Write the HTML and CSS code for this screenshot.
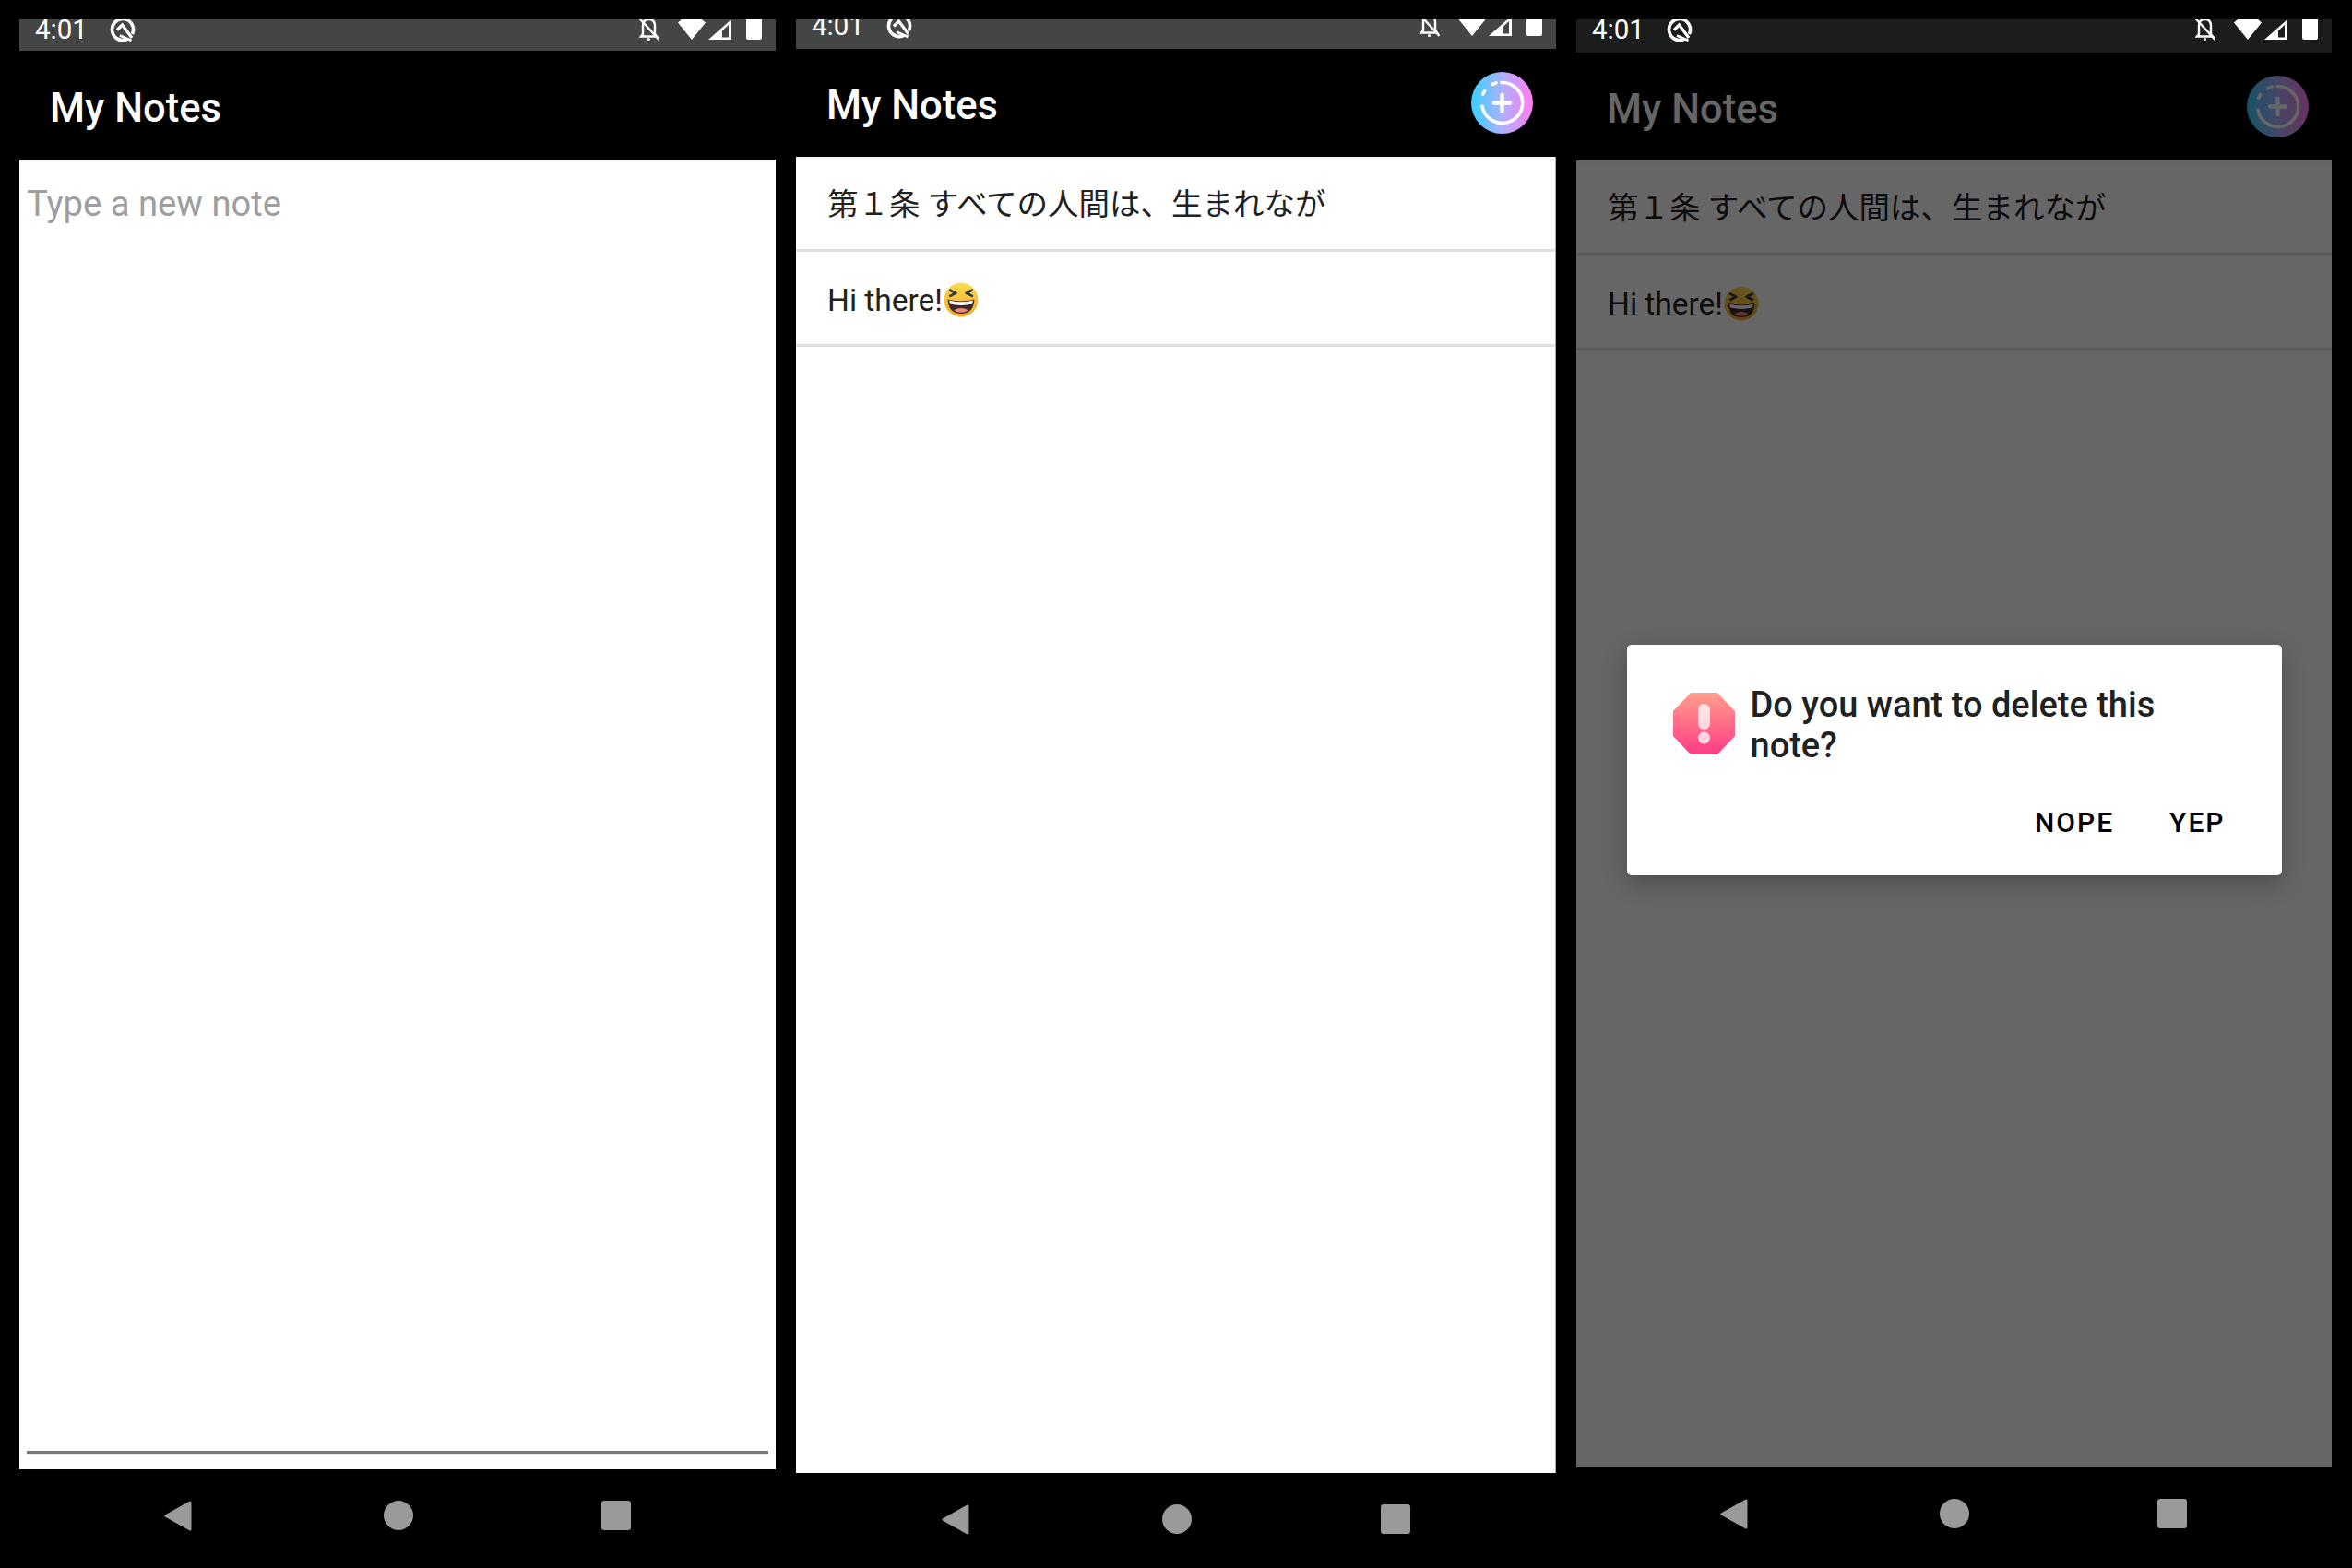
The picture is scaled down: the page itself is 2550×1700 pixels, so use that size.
FILE: index.html
```html
<!DOCTYPE html>
<html lang="en">
<head>
    <meta charset="UTF-8">
    <meta name="viewport" content="width=device-width, initial-scale=1.0">
    <title>My Notes</title>
    <link rel="stylesheet" href="styles.css">
</head>
<body>
    <svg class="defs" width="0" height="0">
        <defs>
            <symbol id="ic-sync" viewBox="0 0 30 30">
                <path d="M20.75 24.96 A11.5 11.5 0 1 1 25.4 19.9" fill="none" stroke="#fff" stroke-width="3.6"/>
                <path d="M9 15.5 L14.5 10 L25 24" fill="none" stroke="#fff" stroke-width="3.2"/>
                <path d="M12 21.5 L24.5 27" stroke="#fff" stroke-width="2.6"/>
            </symbol>
            <symbol id="ic-bell" viewBox="0 0 23 26">
                <path d="M5 19 L5 10 Q5 3 11.5 3 Q18 3 18 10 L18 19 L20 21.5 L3 21.5 Z" fill="none" stroke="#fff" stroke-width="2.4"/>
                <path d="M0.5 1 L22.5 25" stroke="#fff" stroke-width="2.4"/>
                <circle cx="11.5" cy="24.5" r="1.5" fill="#fff"/>
            </symbol>
            <symbol id="ic-wifi" viewBox="0 0 30 22">
                <path d="M4 0 H26 L30 3.5 L15 22 L0 3.5 Z" fill="#fff"/>
            </symbol>
            <symbol id="ic-signal" viewBox="0 0 25 22">
                <path d="M25 0 V22 H0 Z M22 6 L15 12.5 V19.5 H22 Z" fill="#fff" fill-rule="evenodd"/>
            </symbol>
            <symbol id="ic-add" viewBox="0 0 67 67">
                <circle cx="33.5" cy="33.5" r="33.5" fill="url(#add-grad)"/>
                <path d="M12 37 A22 22 0 1 0 33 11.5" fill="none" stroke="#fff" stroke-width="3.6" stroke-linecap="round"/>
                <path d="M23 13.5 L27 11.8 M12.8 24 L14.6 20.5" fill="none" stroke="#fff" stroke-width="3.6" stroke-linecap="round"/>
                <path d="M33.5 25 V42 M25 33.5 H42" stroke="#fff" stroke-width="4.4" stroke-linecap="round"/>
            </symbol>
            <linearGradient id="add-grad" x1="0" y1="0" x2="1" y2="0">
                <stop offset="0" stop-color="#36d1ff"/>
                <stop offset="0.5" stop-color="#aeb0ff"/>
                <stop offset="1" stop-color="#ff7df0"/>
            </linearGradient>
            <symbol id="ic-emoji" viewBox="0 0 37 37">
                <circle cx="18.5" cy="18.5" r="18" fill="url(#emoji-grad)"/>
                <path d="M6 8 L13 11.5 L6 15 M31 8 L24 11.5 L31 15" fill="none" stroke="#3a3a3a" stroke-width="2.6" stroke-linejoin="round"/>
                <path d="M4.5 18 Q18.5 22 32.5 18 Q32 33 18.5 33 Q5 33 4.5 18 Z" fill="#3b2a25"/>
                <path d="M6 19 Q18.5 22.6 31 19 L30.4 23 Q18.5 25.5 6.6 23 Z" fill="#fff"/>
                <path d="M11 29.5 Q18.5 25 26 29.5 Q23 32 18.5 32 Q14 32 11 29.5 Z" fill="#ef8a80"/>
            </symbol>
            <linearGradient id="emoji-grad" x1="0" y1="0" x2="0" y2="1">
                <stop offset="0" stop-color="#fddc55"/>
                <stop offset="1" stop-color="#f5a623"/>
            </linearGradient>
            <linearGradient id="alert-grad" x1="0" y1="0" x2="0" y2="1">
                <stop offset="0" stop-color="#ff9f8c"/>
                <stop offset="1" stop-color="#ff3c86"/>
            </linearGradient>
            <symbol id="ic-back" viewBox="0 0 30 33">
                <path d="M28 2 V31 L2 16.5 Z" fill="#9a9a9a" stroke="#9a9a9a" stroke-width="3" stroke-linejoin="round"/>
            </symbol>
        </defs>
    </svg>

    <div class="screens">
        <div class="phone phone-editor">
            <div class="status-bar">
                <div class="status-left">
                    <span class="clock">4:01</span>
                    <svg class="ic-sync"><use href="#ic-sync"/></svg>
                </div>
                <div class="status-right">
                    <svg class="ic-bell"><use href="#ic-bell"/></svg>
                    <svg class="ic-wifi"><use href="#ic-wifi"/></svg>
                    <svg class="ic-signal"><use href="#ic-signal"/></svg>
                    <span class="battery"></span>
                </div>
            </div>
            <div class="app">
                <div class="app-bar"><span class="app-title">My Notes</span></div>
                <div class="content editor">
                    <div class="placeholder">Type a new note</div>
                    <div class="input-line"></div>
                </div>
            </div>
            <div class="nav-bar">
                <svg class="nav-back"><use href="#ic-back"/></svg>
                <span class="nav-home"></span>
                <span class="nav-recent"></span>
            </div>
        </div>

        <div class="phone phone-list">
            <div class="status-bar">
                <div class="status-left">
                    <span class="clock">4:01</span>
                    <svg class="ic-sync"><use href="#ic-sync"/></svg>
                </div>
                <div class="status-right">
                    <svg class="ic-bell"><use href="#ic-bell"/></svg>
                    <svg class="ic-wifi"><use href="#ic-wifi"/></svg>
                    <svg class="ic-signal"><use href="#ic-signal"/></svg>
                    <span class="battery"></span>
                </div>
            </div>
            <div class="app">
                <div class="app-bar">
                    <span class="app-title">My Notes</span>
                    <svg class="ic-add"><use href="#ic-add"/></svg>
                </div>
                <div class="content">
                    <div class="note">第１条 すべての人間は、生まれなが</div>
                    <div class="note">Hi there!<svg class="ic-emoji"><use href="#ic-emoji"/></svg></div>
                </div>
            </div>
            <div class="nav-bar">
                <svg class="nav-back"><use href="#ic-back"/></svg>
                <span class="nav-home"></span>
                <span class="nav-recent"></span>
            </div>
        </div>

        <div class="phone phone-dialog">
            <div class="status-bar">
                <div class="status-left">
                    <span class="clock">4:01</span>
                    <svg class="ic-sync"><use href="#ic-sync"/></svg>
                </div>
                <div class="status-right">
                    <svg class="ic-bell"><use href="#ic-bell"/></svg>
                    <svg class="ic-wifi"><use href="#ic-wifi"/></svg>
                    <svg class="ic-signal"><use href="#ic-signal"/></svg>
                    <span class="battery"></span>
                </div>
            </div>
            <div class="app">
                <div class="app-bar">
                    <span class="app-title">My Notes</span>
                    <svg class="ic-add"><use href="#ic-add"/></svg>
                </div>
                <div class="content">
                    <div class="note">第１条 すべての人間は、生まれなが</div>
                    <div class="note">Hi there!<svg class="ic-emoji"><use href="#ic-emoji"/></svg></div>
                </div>
                <div class="scrim">
                    <div class="dialog">
                        <div class="dialog-body">
                            <svg class="ic-alert" viewBox="0 0 67 67">
                                <path d="M19 0 H48 L67 20 V47 L48 67 H19 L0 47 V20 Z" fill="url(#alert-grad)"/>
                                <rect x="27" y="12" width="13" height="28" rx="6.5" fill="#fff" fill-opacity="0.75"/>
                                <circle cx="33.5" cy="49" r="6.5" fill="#fff" fill-opacity="0.75"/>
                            </svg>
                            <div class="dialog-text">Do you want to delete this note?</div>
                        </div>
                        <div class="dialog-actions">
                            <span class="dialog-btn">NOPE</span>
                            <span class="dialog-btn">YEP</span>
                        </div>
                    </div>
                </div>
            </div>
            <div class="nav-bar">
                <svg class="nav-back"><use href="#ic-back"/></svg>
                <span class="nav-home"></span>
                <span class="nav-recent"></span>
            </div>
        </div>
    </div>
</body>
</html>
```

FILE: styles.css
```css
html, body {
    margin: 0;
    height: 100%;
    background-color: #000;
    overflow: hidden;
}
body {
    font-family: 'Roboto', 'Noto Sans CJK JP', sans-serif;
    color: #212121;
}
.defs {
    display: block;
    height: 0;
}
.screens {
    display: flex;
    gap: 22px;
    padding: 21px 22px 0 21px;
}
.phone {
    display: flex;
    flex-direction: column;
}
.phone-editor { width: 820px; }
.phone-list { width: 824px; }
.phone-dialog { width: 819px; }

/* status bar */
.status-bar {
    display: flex;
    justify-content: space-between;
    align-items: flex-end;
    height: 34px;
    padding: 0 15px 12px 17px;
    box-sizing: border-box;
    background-color: #444645;
    overflow: hidden;
}
.phone-list .status-bar {
    height: 32px;
    padding-bottom: 14px;
}
.phone-dialog .status-bar {
    height: 36px;
    padding-bottom: 14px;
    background-color: #1b1d1c;
}
.status-left, .status-right {
    display: flex;
    align-items: flex-end;
}
.clock {
    font-size: 29.5px;
    line-height: 22px;
    color: #fff;
    margin-right: 23px;
}
.ic-sync {
    width: 30px;
    height: 30px;
    margin-bottom: -4px;
}
.ic-bell {
    width: 23px;
    height: 26px;
    margin-right: 20px;
    margin-bottom: -1px;
}
.ic-wifi {
    width: 30px;
    height: 22px;
    margin-right: 3px;
}
.ic-signal {
    width: 25px;
    height: 22px;
    margin-right: 16px;
}
.battery {
    display: block;
    width: 17px;
    height: 24px;
    background-color: #fff;
    border-radius: 2px;
}

/* app */
.app {
    position: relative;
}
.app-bar {
    display: flex;
    justify-content: space-between;
    align-items: center;
    height: 118px;
    padding: 0 25px 0 33px;
    box-sizing: border-box;
    background-color: #000;
}
.phone-list .app-bar, .phone-dialog .app-bar {
    height: 117px;
}
.app-title {
    font-size: 43.5px;
    font-weight: 500;
    color: #fff;
    margin-top: 6px;
}
.ic-add {
    width: 67px;
    height: 67px;
}
.content {
    height: 1427px;
    background-color: #fff;
    box-shadow: inset 0 5px 5px -4px rgba(0, 0, 0, 0.08);
}
.phone-list .content {
    border-right: 1px solid #aaa;
    box-sizing: border-box;
}
.phone-dialog .content {
    height: 1417px;
}
.editor {
    display: flex;
    flex-direction: column;
    justify-content: space-between;
    height: 1420px;
    padding: 0 8px 16px 8px;
    box-sizing: border-box;
}
.placeholder {
    font-size: 38.2px;
    line-height: 44px;
    padding-top: 26px;
    color: #9e9e9e;
}
.input-line {
    height: 3px;
    background-color: #777;
    border-bottom: 1px solid #e6e6e6;
}
.note {
    display: flex;
    align-items: center;
    height: 103px;
    box-sizing: border-box;
    padding-left: 34px;
    font-size: 33.5px;
    border-bottom: 3px solid #e0e0e0;
}
.note:first-child {
    padding-bottom: 3px;
}
.note:nth-child(2) {
    padding-top: 4px;
}
.ic-emoji {
    width: 38px;
    height: 38px;
    margin-left: 1px;
}

/* dialog */
.scrim {
    position: absolute;
    top: 0;
    left: 0;
    right: 0;
    bottom: 0;
    display: flex;
    justify-content: center;
    align-items: center;
    background-color: rgba(0, 0, 0, 0.6);
}
.dialog {
    width: 710px;
    height: 250px;
    padding: 43px 61px 0 50px;
    box-sizing: border-box;
    background-color: #fff;
    border-radius: 5px;
    box-shadow: 0 8px 24px rgba(0, 0, 0, 0.25);
}
.dialog-body {
    display: flex;
    gap: 17px;
}
.ic-alert {
    flex: none;
    width: 67px;
    height: 67px;
    margin-top: 9px;
}
.dialog-text {
    font-size: 38px;
    font-weight: 500;
    line-height: 44px;
    padding-right: 30px;
}
.dialog-actions {
    display: flex;
    justify-content: flex-end;
    gap: 60px;
    margin-top: 44px;
}
.dialog-btn {
    font-size: 30px;
    font-weight: 500;
    letter-spacing: 2px;
    color: #000;
}

/* nav bar */
.nav-bar {
    display: flex;
    justify-content: center;
    align-items: center;
    gap: 206px;
    height: 100px;
}
.phone-list .nav-bar {
    gap: 207px;
}
.phone-dialog .nav-bar {
    padding-right: 2px;
}
.nav-back {
    width: 30px;
    height: 33px;
}
.nav-home {
    width: 32px;
    height: 32px;
    margin: 0 -2px 0 2px;
    border-radius: 50%;
    background-color: #9a9a9a;
}
.nav-recent {
    width: 32px;
    height: 32px;
    border-radius: 3px;
    background-color: #9a9a9a;
}
```
